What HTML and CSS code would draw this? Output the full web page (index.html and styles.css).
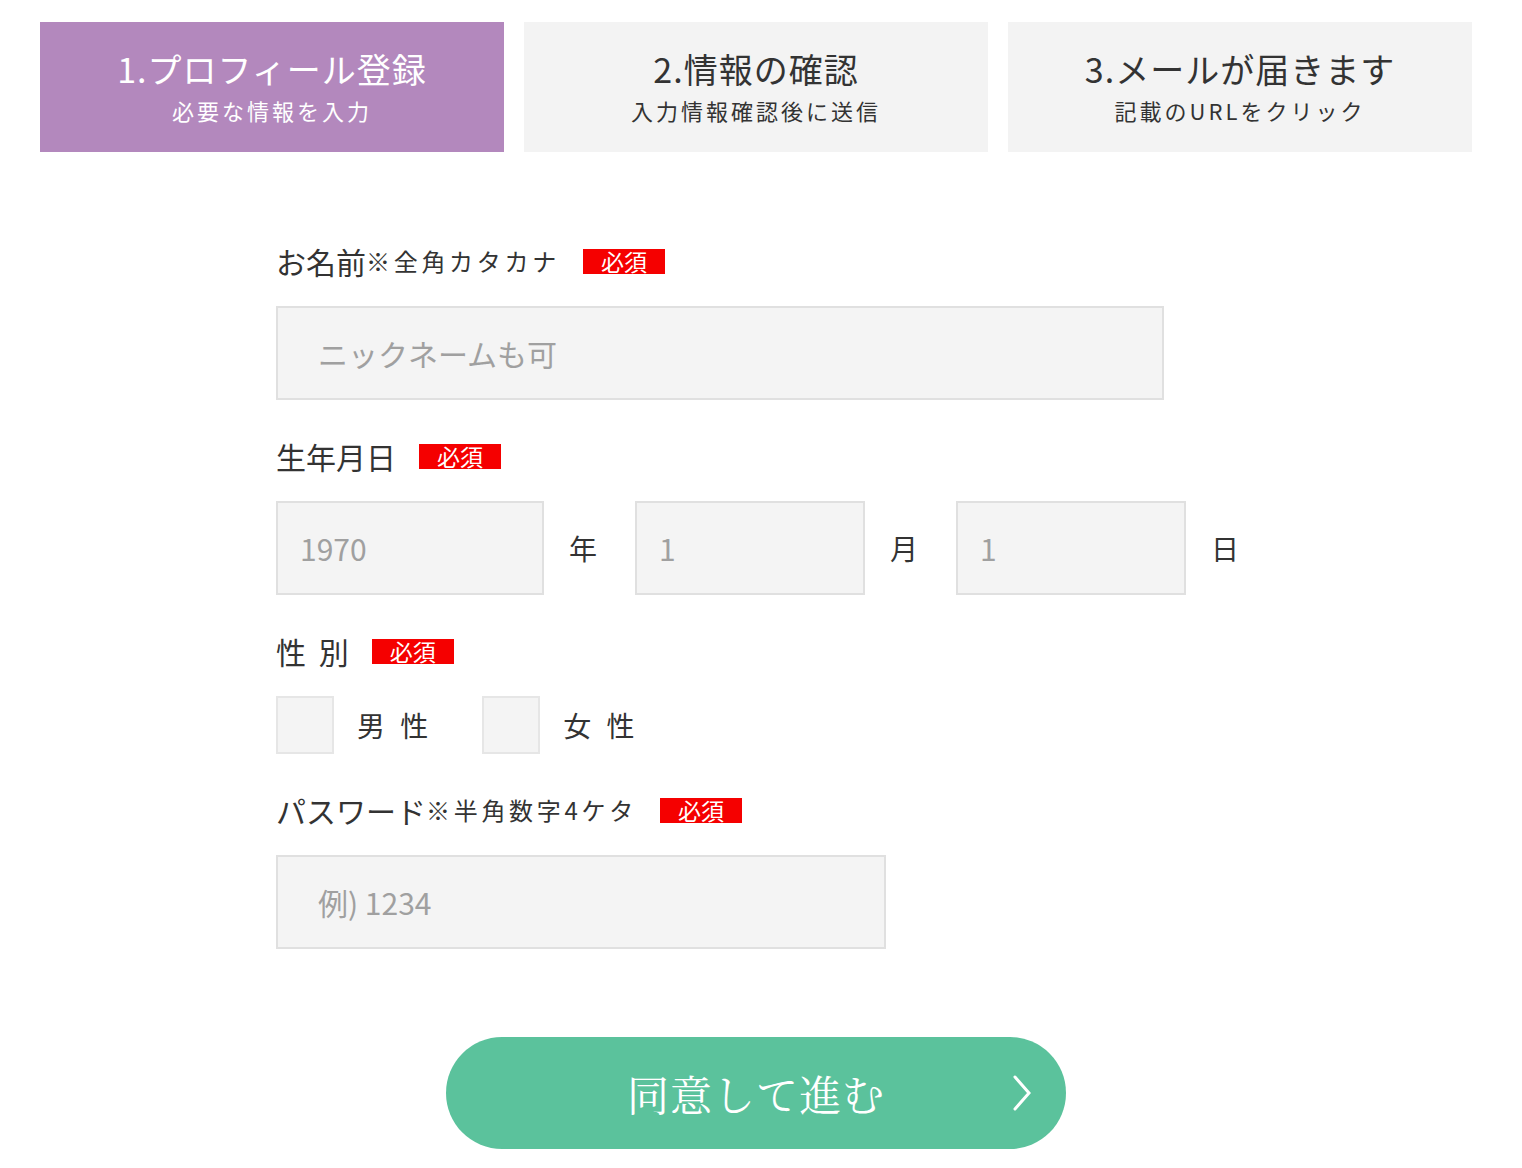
FILE: index.html
```html
<!DOCTYPE html>
<html lang="ja">
<head>
    <meta charset="UTF-8">
    <meta name="viewport" content="width=device-width, initial-scale=1.0">
    <title>プロフィール登録</title>
    <link rel="stylesheet" href="styles.css">
</head>
<body>
    <ol class="steps">
        <li class="step current">
            <span class="step-title">1.プロフィール登録</span>
            <span class="step-sub">必要な情報を入力</span>
        </li>
        <li class="step">
            <span class="step-title">2.情報の確認</span>
            <span class="step-sub">入力情報確認後に送信</span>
        </li>
        <li class="step">
            <span class="step-title">3.メールが届きます</span>
            <span class="step-sub">記載のURLをクリック</span>
        </li>
    </ol>

    <form class="profile-form" action="#" method="post">
        <div class="field">
            <div class="field-label">
                <label for="name">お名前</label><span class="note">※全角カタカナ</span>
                <span class="required">必須</span>
            </div>
            <input type="text" id="name" class="text-input name-input" placeholder="ニックネームも可">
        </div>

        <div class="field">
            <div class="field-label">
                <label for="year">生年月日</label>
                <span class="required">必須</span>
            </div>
            <div class="date-row">
                <input type="text" id="year" class="text-input date-input year" placeholder="1970">
                <span class="unit">年</span>
                <input type="text" id="month" class="text-input date-input" placeholder="1">
                <span class="unit">月</span>
                <input type="text" id="day" class="text-input date-input" placeholder="1">
                <span class="unit">日</span>
            </div>
        </div>

        <div class="field">
            <div class="field-label">
                <span class="label-text spaced">性 別</span>
                <span class="required">必須</span>
            </div>
            <div class="gender-row">
                <label class="check"><input type="checkbox" name="gender" value="male"><span>男 性</span></label>
                <label class="check"><input type="checkbox" name="gender" value="female"><span>女 性</span></label>
            </div>
        </div>

        <div class="field">
            <div class="field-label">
                <label for="password">パスワード</label><span class="note">※半角数字4ケタ</span>
                <span class="required">必須</span>
            </div>
            <input type="text" id="password" class="text-input password-input" placeholder="例) 1234">
        </div>

        <button type="submit" class="submit-btn">
            同意して進む
            <svg class="chevron" width="20" height="36" viewBox="0 0 20 36">
                <path d="M3 2 L17 18 L3 34" fill="none" stroke="#fff" stroke-width="3" stroke-linecap="round"/>
            </svg>
        </button>
    </form>
</body>
</html>
```

FILE: styles.css
```css
body {
    margin: 0;
    padding: 0;
    font-family: "Noto Sans CJK JP", "Noto Sans", sans-serif;
    color: #333;
    background: #fff;
}

.steps {
    list-style: none;
    margin: 22px 50px 0 40px;
    padding: 0;
    display: grid;
    grid-template-columns: repeat(3, 1fr);
    gap: 20px;
}

.step {
    height: 130px;
    background-color: #f3f3f3;
    display: flex;
    flex-direction: column;
    align-items: center;
    justify-content: center;
    gap: 6px;
    color: #333;
}

.step.current {
    background-color: #b388bd;
    color: #fff;
}

.step-title {
    font-size: 34px;
    line-height: 40px;
    letter-spacing: 1px;
}

.step-sub {
    font-size: 22px;
    line-height: 30px;
    letter-spacing: 3px;
}

.profile-form {
    width: 970px;
    margin: 0 auto;
    padding: 91px 0 40px;
}

.field {
    margin-bottom: 38px;
}

.field-label {
    display: flex;
    align-items: center;
    height: 36px;
    margin-bottom: 27px;
    font-size: 30px;
}

.field-label label,
.label-text {
    font-size: 30px;
    line-height: 36px;
}

.spaced {
    word-spacing: 6px;
}

.note {
    font-size: 24px;
    letter-spacing: 3.7px;
    line-height: 36px;
}

.required {
    display: inline-block;
    margin-left: 23px;
    width: 82px;
    height: 25px;
    line-height: 25px;
    background-color: #f50000;
    color: #fff;
    font-size: 23px;
    text-align: center;
}

.text-input {
    box-sizing: border-box;
    height: 94px;
    border: 2px solid #e0e0e0;
    background-color: #f4f4f4;
    font-family: inherit;
    font-size: 30px;
    color: #333;
    outline: none;
}

.text-input::placeholder {
    color: #a0a0a0;
}

.name-input {
    width: 888px;
    padding: 0 40px;
}

.password-input {
    width: 610px;
    padding: 0 40px;
}

.date-row {
    display: flex;
    align-items: center;
}

.date-input {
    width: 230px;
    padding: 0 22px;
}

.date-input.year {
    width: 268px;
}

.unit {
    font-size: 28px;
    width: 28px;
    margin: 0 38px 0 25px;
}

.gender-row {
    display: flex;
    align-items: center;
    gap: 54px;
}

.check {
    display: flex;
    align-items: center;
    gap: 23px;
    font-size: 28px;
    word-spacing: 9px;
    cursor: pointer;
}

.check input {
    appearance: none;
    -webkit-appearance: none;
    margin: 0;
    width: 58px;
    height: 58px;
    box-sizing: border-box;
    border: 2px solid #e6e6e6;
    background-color: #f4f4f4;
}

.check input:checked {
    background-color: #b388bd;
}

.submit-btn {
    position: relative;
    display: block;
    width: 620px;
    height: 112px;
    margin: 88px 0 0 170px;
    border: none;
    border-radius: 56px;
    background-color: #5bc29c;
    color: #fff;
    font-family: "Noto Serif CJK JP", "DejaVu Serif", serif;
    font-size: 42px;
    letter-spacing: 1px;
    cursor: pointer;
}

.chevron {
    position: absolute;
    right: 34px;
    top: 38px;
}
```
